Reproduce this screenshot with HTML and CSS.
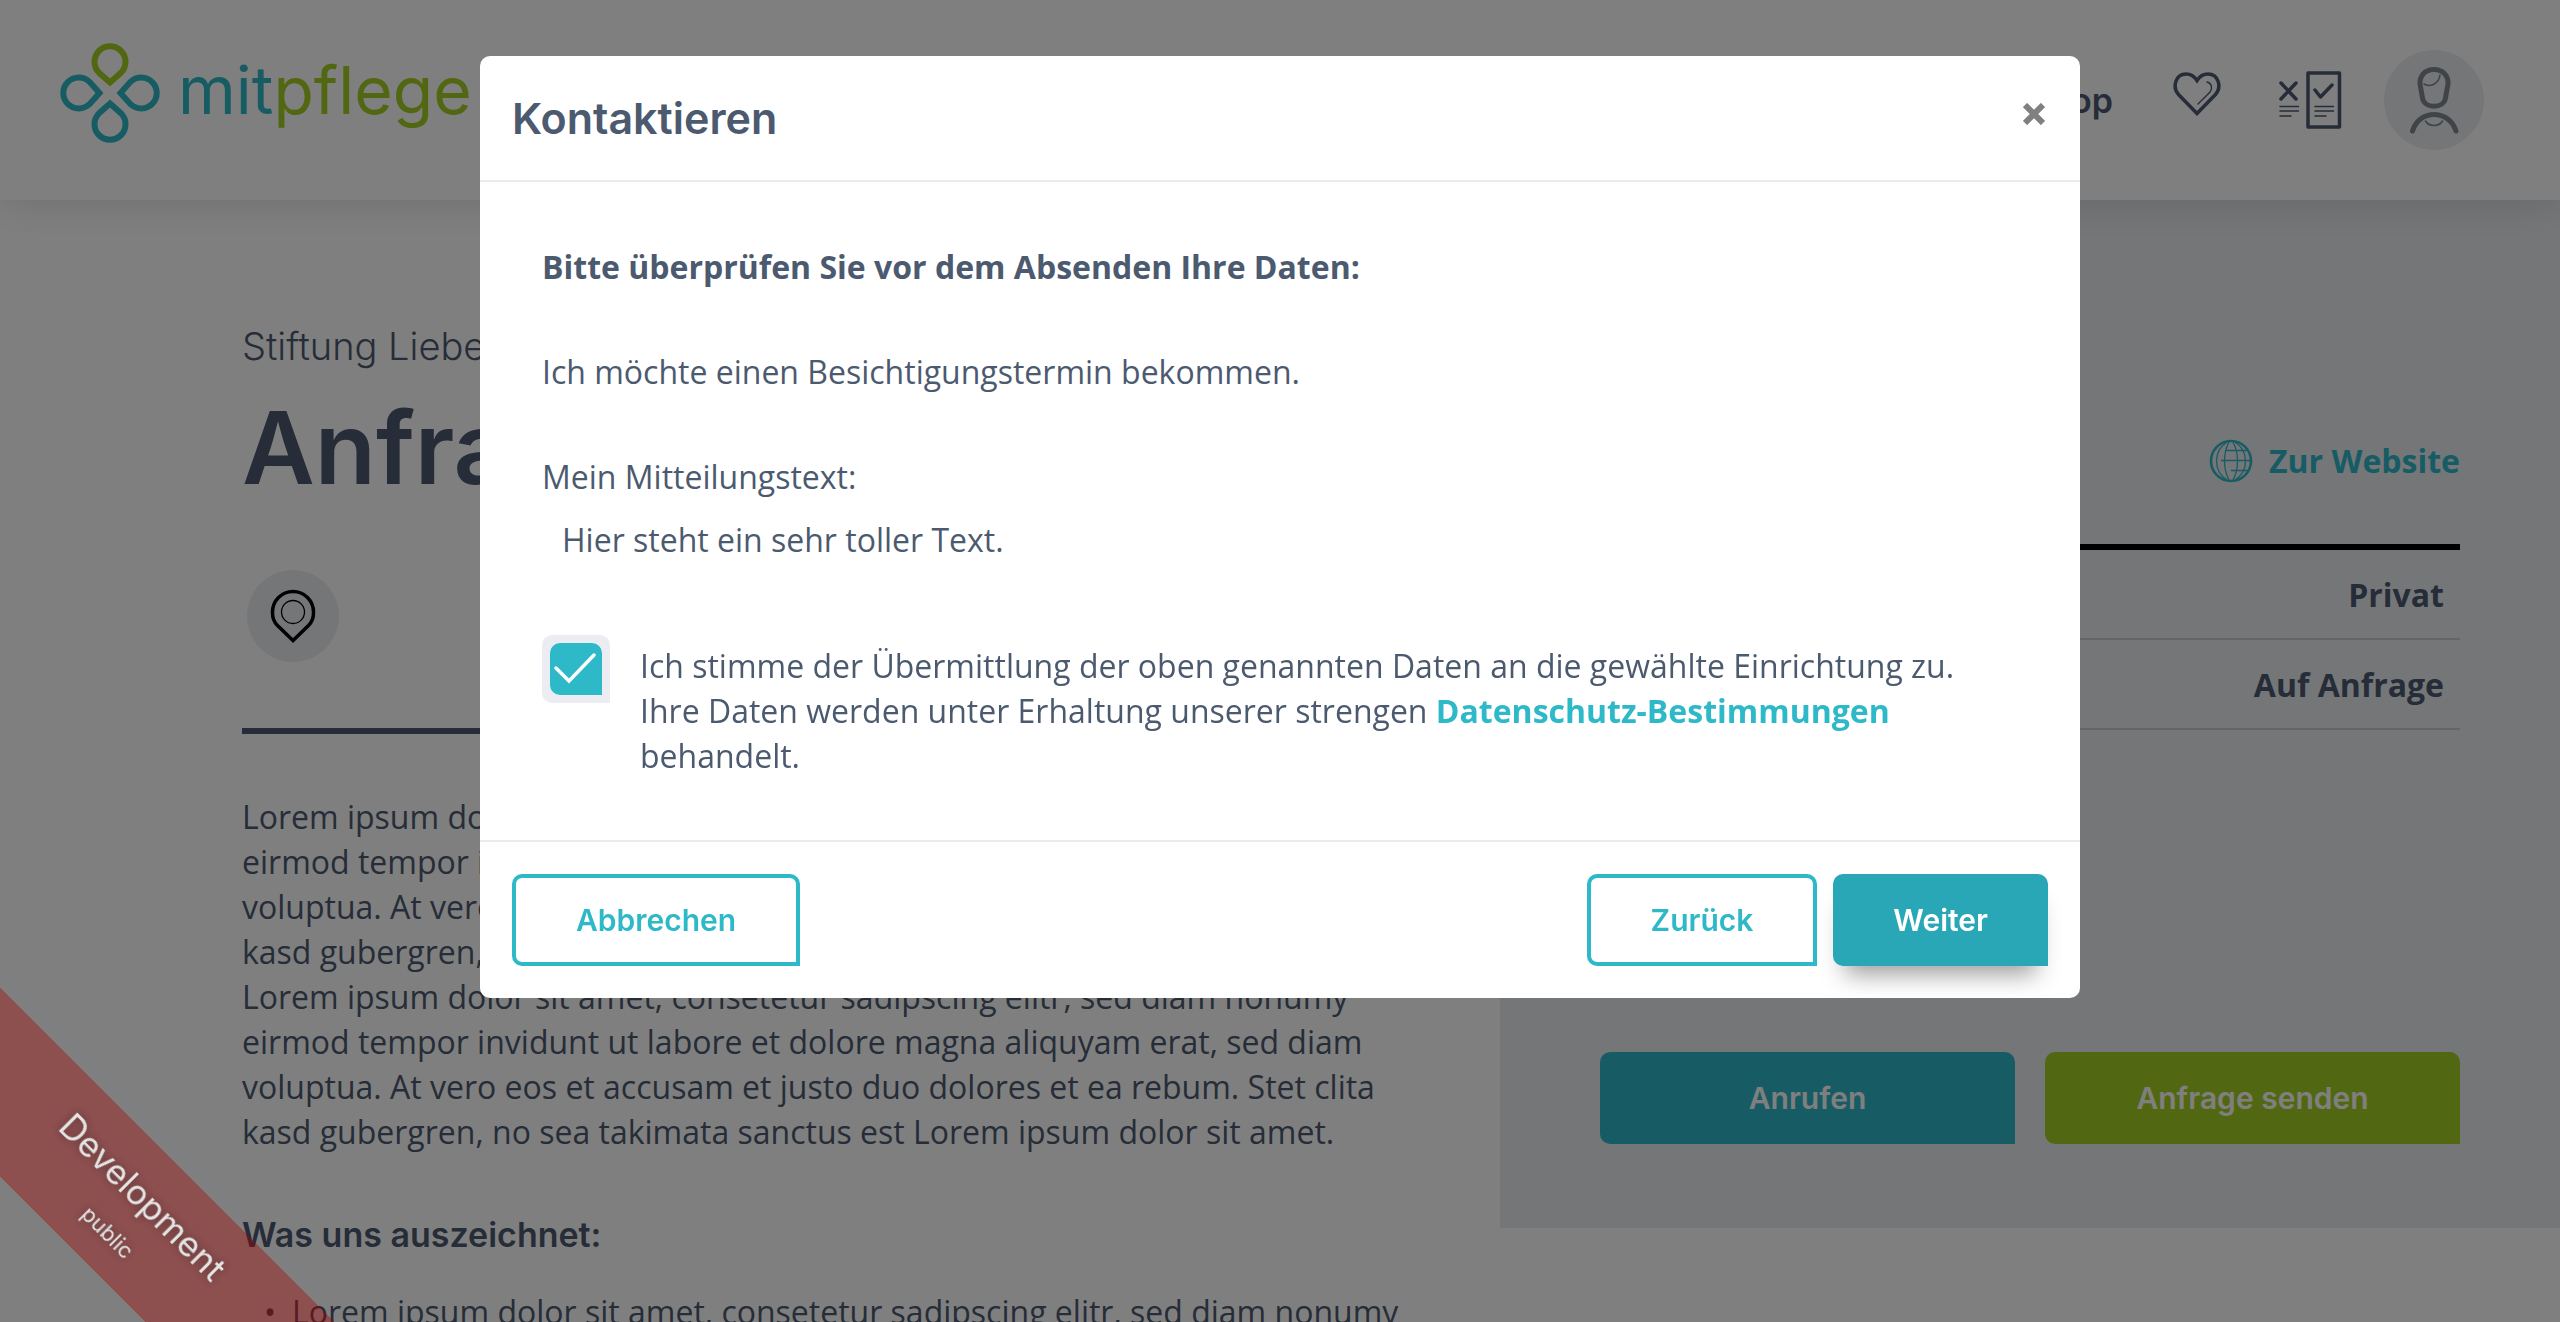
FILE: index.html
```html
<!DOCTYPE html>
<html lang="de">
<head>
  <meta charset="utf-8">
  <meta name="viewport" content="width=device-width, initial-scale=1">
  <title>mitpflege – Kontaktieren</title>
  <link rel="stylesheet" href="styles.css">
</head>
<body>
  <div class="page">
    <header class="site-header">
      <a class="brand" href="#">
        <svg class="brand-mark" viewBox="-50 -50 100 100" aria-hidden="true">
          <path class="petal petal-green" d="M0 -10.500L-11.200 -20.500A15.500 15.500 0 1 1 11.200 -20.500Z"/>
          <path class="petal" d="M0 -10.500L-11.200 -20.500A15.500 15.500 0 1 1 11.200 -20.500Z" transform="rotate(90)"/>
          <path class="petal" d="M0 -10.500L-11.200 -20.500A15.500 15.500 0 1 1 11.200 -20.500Z" transform="rotate(180)"/>
          <path class="petal" d="M0 -10.500L-11.200 -20.500A15.500 15.500 0 1 1 11.200 -20.500Z" transform="rotate(270)"/>
        </svg>
        <span class="brand-name">mit<span class="brand-accent">pflege</span></span>
      </a>
      <nav class="site-nav">
        <a class="nav-link" href="#">Shop</a>
        <a class="nav-icon nav-heart" href="#" aria-label="Merkliste">
          <svg width="48" height="44" viewBox="0 0 48 44" fill="none" stroke="currentColor">
            <path stroke-width="3.500" d="M24 41.500L5.500 22.500C-1 15 2.500 2 13 2C18 2 21.500 4.500 24 8.500C26.500 4.500 30 2 35 2C45.500 2 49 15 42.500 22.500Z"/>
            <path stroke-width="1.400" stroke-linecap="round" d="M34 10C38.500 11 40 16 37 20L25 32"/>
          </svg>
        </a>
        <a class="nav-icon" href="#" aria-label="Vergleich">
          <svg width="64" height="60" viewBox="0 0 64 60" fill="none" stroke="currentColor" stroke-linecap="round" stroke-linejoin="round">
            <rect x="30" y="3" width="31.500" height="54" stroke-width="3.500"/>
            <path stroke-width="3.500" d="M3 13L18 29M18 13L3 29M37 20L42.500 27L54 15"/>
            <path stroke-width="1.500" d="M2 36.500H20.500M2 41H20.500M2 46H13M37 36.500H55.500M37 41H55.500M37 46H48"/>
          </svg>
        </a>
        <a class="avatar" href="#" aria-label="Mein Konto">
          <svg width="100" height="100" viewBox="0 0 100 100" fill="none" stroke="currentColor" stroke-linecap="round">
            <path stroke-width="5" d="M50 19.500C40 19.500 35.500 27 36 34L38.500 48C40 59 60 59 61.500 48L64 34C64.500 27 60 19.500 50 19.500Z"/>
            <path stroke-width="1.600" d="M56 25C55 33 47 38 40 34M41.500 71C45 77 55 77 58.500 71"/>
            <path stroke-width="5" d="M28.500 81C35 59 65 59 72 81"/>
          </svg>
        </a>
      </nav>
    </header>

    <div class="columns">
      <main class="content">
        <p class="provider">Stiftung Liebenau</p>
        <h1 class="title">Anfrage</h1>
        <span class="pin">
          <svg width="92" height="92" viewBox="0 0 92 92" fill="none" stroke="currentColor">
            <path stroke-width="3.500" d="M46 70.500L30.500 55.500C25 50 25.500 44 25.500 42A20.500 20.500 0 0 1 66.500 42C66.500 44 67 50 61.500 55.500Z"/>
            <circle cx="46" cy="42" r="11.500" stroke-width="1.300"/>
          </svg>
        </span>
        <hr class="rule">
        <p class="copy">Lorem ipsum dolor sit amet, consetetur sadipscing elitr, sed diam nonumy eirmod tempor invidunt ut labore et dolore magna aliquyam erat, sed diam voluptua. At vero eos et accusam et justo duo dolores et ea rebum. Stet clita kasd gubergren, no sea takimata sanctus est Lorem ipsum dolor sit amet. Lorem ipsum dolor sit amet, consetetur sadipscing elitr, sed diam nonumy eirmod tempor invidunt ut labore et dolore magna aliquyam erat, sed diam voluptua. At vero eos et accusam et justo duo dolores et ea rebum. Stet clita kasd gubergren, no sea takimata sanctus est Lorem ipsum dolor sit amet.</p>
        <h2 class="subtitle">Was uns auszeichnet:</h2>
        <ul class="list">
          <li>Lorem ipsum dolor sit amet, consetetur sadipscing elitr, sed diam nonumy</li>
        </ul>
      </main>

      <aside class="sidebar">
        <a class="website" href="#">
          <svg width="44" height="44" viewBox="0 0 44 44" fill="none" stroke="currentColor">
            <circle cx="22" cy="22" r="20" stroke-width="2.600"/>
            <path stroke-width="1.300" d="M18 3C4 12 4 32 18 41M20 3C14 14 14 30 20 41M24 3C30 14 30 30 24 41M26 3C40 12 40 32 26 41M16 11.500H38M12 21.500H42M22 31.500H39"/>
          </svg>
          <span>Zur Website</span>
        </a>
        <table class="facts">
          <tbody>
            <tr><td>Privat</td></tr>
            <tr><td>Auf Anfrage</td></tr>
          </tbody>
        </table>
        <div class="actions">
          <button class="btn btn-teal" type="button">Anrufen</button>
          <button class="btn btn-green" type="button">Anfrage senden</button>
        </div>
      </aside>
    </div>
  </div>

  <div class="backdrop">
    <section class="modal" role="dialog" aria-modal="true" aria-labelledby="modal-title">
      <header class="modal-header">
        <h2 class="modal-title" id="modal-title">Kontaktieren</h2>
        <button class="close" type="button" aria-label="Schließen">
          <svg width="22" height="22" viewBox="0 0 22 22" fill="none" stroke="currentColor" stroke-width="6"><path d="M2 2L20 20M20 2L2 20"/></svg>
        </button>
      </header>
      <div class="modal-body">
        <p class="lead">Bitte überprüfen Sie vor dem Absenden Ihre Daten:</p>
        <p>Ich möchte einen Besichtigungstermin bekommen.</p>
        <div class="message">
          <p>Mein Mitteilungstext:</p>
          <p class="message-text">Hier steht ein sehr toller Text.</p>
        </div>
        <div class="consent">
          <span class="check">
            <input class="check-input" type="checkbox" id="consent" checked>
            <svg class="check-tick" width="52" height="52" viewBox="0 0 52 52" fill="none" stroke="currentColor" stroke-width="3.500" stroke-linecap="round"><path d="M6 25L19 38L44 12"/></svg>
          </span>
          <label class="consent-text" for="consent">Ich stimme der Übermittlung der oben genannten Daten an die gewählte Einrichtung zu. Ihre Daten werden unter Erhaltung unserer strengen <a class="link" href="#">Datenschutz-Bestimmungen</a> behandelt.</label>
        </div>
      </div>
      <footer class="modal-footer">
        <button class="btn btn-outline btn-cancel" type="button">Abbrechen</button>
        <button class="btn btn-outline" type="button">Zurück</button>
        <button class="btn btn-primary" type="button">Weiter</button>
      </footer>
    </section>
  </div>

  <div class="ribbon">
    <span class="ribbon-main">Development</span>
    <span class="ribbon-sub">public</span>
  </div>
</body>
</html>
```
FILE: styles.css
```css
:root {
  --text: #4c5a70;
  --teal: #2eb9c9;
  --teal-dark: #29a7b6;
  --green: #a5cf22;
  --line: #e8ebef;
  --panel: #ebedf0;
  --heading: Inter, "Open Sans", sans-serif;
  --body: "Open Sans", "Noto Sans", sans-serif;
}

* { box-sizing: border-box; }

body {
  margin: 0;
  overflow: hidden;
  background: #fff;
  color: var(--text);
  font: 400 32px/45px var(--body);
}

p, h1, h2, ul { margin: 0; }
a { color: inherit; text-decoration: none; }
svg { display: block; flex: none; }

.page {
  height: 100vh;
  overflow: hidden;
}

/* Header */
.site-header {
  position: relative;
  display: flex;
  align-items: center;
  justify-content: space-between;
  height: 200px;
  padding: 0 76px 0 60px;
  background: #fff;
  box-shadow: 0 0 40px rgba(0, 0, 0, .15);
}

.brand {
  display: flex;
  align-items: center;
  gap: 18px;
  padding-bottom: 15px;
  color: #2eb9c4;
}
.brand-mark { width: 100px; height: 100px; }
.petal { fill: none; stroke: currentColor; stroke-width: 6; }
.petal-green { stroke: var(--green); }
.brand-name {
  padding-bottom: 6px;
  font: 400 66px/80px var(--heading);
}
.brand-accent { color: var(--green); }

.site-nav {
  display: flex;
  align-items: center;
}
.nav-link { margin-right: 60px; font: 600 34px/45px var(--heading); }
.nav-heart { margin-right: 57px; padding-bottom: 12px; }
.avatar {
  margin-left: 42px;
  border-radius: 50%;
  background: var(--panel);
  color: #808790;
}

/* Page columns */
.columns {
  display: grid;
  grid-template-columns: 1500fr 1060fr;
  align-items: start;
}

.content { padding: 122px 80px 0 242px; }
.provider { font: 300 38px/48px var(--heading); }
.title {
  margin-top: 18px;
  font: 600 100px/120px var(--heading);
}
.pin {
  display: inline-block;
  margin: 62px 0 0 5px;
  border-radius: 50%;
  background: var(--panel);
  color: #000;
  vertical-align: top;
}
.rule {
  height: 6px;
  margin: 66px 0 60px;
  border: 0;
  background: var(--text);
}
.subtitle {
  margin-top: 58px;
  font: 600 34px/45px var(--heading);
}
.list {
  margin-top: 32px;
  padding-left: 50px;
  list-style: none;
}
.list li::before {
  content: "•";
  float: left;
  margin-left: -28px;
}

.sidebar {
  min-height: 1028px;
  padding: 238px 100px 84px;
  background: var(--panel);
}
.website {
  display: flex;
  align-items: center;
  justify-content: flex-end;
  gap: 16px;
  color: var(--teal);
  font-weight: 700;
}
.facts {
  width: 100%;
  margin-top: 61px;
  border-top: 6px solid #000;
  border-spacing: 0;
  font-weight: 700;
  text-align: right;
}
.facts td {
  height: 90px;
  padding: 0 16px;
  border-bottom: 2px solid #c6cad6;
}
.actions {
  display: grid;
  grid-template-columns: 1fr 1fr;
  gap: 30px;
  margin-top: 322px;
}

/* Buttons */
.btn {
  height: 92px;
  padding: 0 60px;
  border: 0;
  border-radius: 10px 10px 0 10px;
  color: #fff;
  font: 600 30px/40px var(--heading);
  white-space: nowrap;
}
.btn-teal { background: var(--teal); }
.btn-green { background: var(--green); }
.btn-outline {
  border: 4px solid var(--teal);
  background: #fff;
  color: var(--teal);
}
.btn-primary {
  background: var(--teal-dark);
  box-shadow: 0 20px 24px -12px rgba(0, 0, 0, .4);
}

/* Dialog */
.backdrop {
  position: fixed;
  inset: 0;
  padding: 56px 32px;
  background: rgba(0, 0, 0, .5);
}
.modal {
  max-width: 1600px;
  margin: 0 auto;
  border-radius: 10px;
  background: #fff;
}
.modal-header {
  display: flex;
  align-items: center;
  justify-content: space-between;
  padding: 37px 32px;
  border-bottom: 2px solid var(--line);
}
.modal-title { font: 600 43px/50px var(--heading); }
.close {
  margin-bottom: 8px;
  padding: 3px;
  border: 0;
  background: none;
  color: #808080;
}
.modal-body {
  display: flex;
  flex-direction: column;
  gap: 60px;
  padding: 62px;
}
.lead { font-weight: 700; }
.message-text { padding: 18px 20px 0; }
.consent {
  display: flex;
  gap: 30px;
  margin-top: 13px;
}
.check {
  display: grid;
  flex: none;
  place-items: center;
  width: 68px;
  height: 68px;
  border-radius: 10px 10px 0 10px;
  background: #ebedf2;
}
.check-input,
.check-tick { grid-area: 1 / 1; }
.check-input {
  width: 52px;
  height: 52px;
  margin: 0;
  appearance: none;
  border-radius: 10px 10px 0 10px;
  background: #fff;
}
.check-input:checked { background: var(--teal); }
.check-tick { color: #fff; pointer-events: none; }
.consent-text { padding-top: 8px; }
.link { color: var(--teal); font-weight: 700; }
.modal-footer {
  display: flex;
  gap: 16px;
  padding: 32px;
  border-top: 2px solid var(--line);
}
.btn-cancel { margin-right: auto; }

/* Environment ribbon */
.ribbon {
  position: fixed;
  left: -171px;
  bottom: 44px;
  display: flex;
  flex-direction: column;
  align-items: center;
  justify-content: center;
  width: 600px;
  height: 134px;
  background: rgba(165, 0, 0, .38);
  color: #e4e4e4;
  font-family: var(--heading);
  text-shadow: 0 0 10px rgba(0, 0, 0, .4);
  transform: rotate(45deg);
}
.ribbon-main { font-size: 35px; line-height: 60px; }
.ribbon-sub { font-size: 22px; line-height: 40px; }
```
